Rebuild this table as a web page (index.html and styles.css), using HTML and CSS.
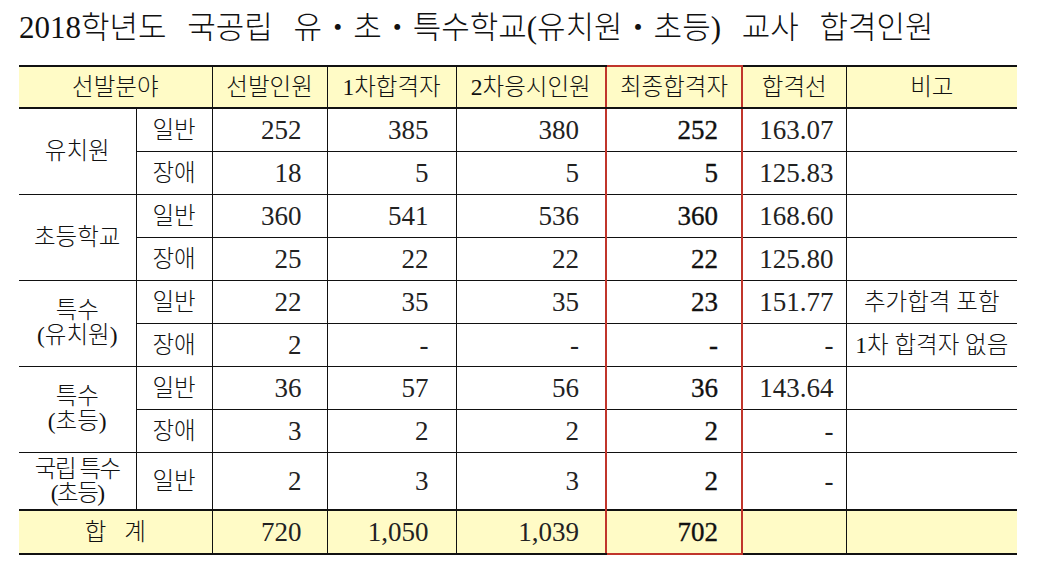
FILE: index.html
```html
<!DOCTYPE html>
<html lang="ko">
<head>
<meta charset="utf-8">
<title>2018학년도 국공립 유・초・특수학교 교사 합격인원</title>
<link rel="stylesheet" href="styles.css">
</head>
<body>
<div class="page">
  <h1 class="title">2018학년도 국공립 유・초・특수학교(유치원・초등) 교사 합격인원</h1>
  <table class="result">
    <colgroup>
      <col class="w-group"><col class="w-sub"><col class="w-c2"><col class="w-c3"><col class="w-c4"><col class="w-c5"><col class="w-c6"><col class="w-c7">
    </colgroup>
    <thead>
      <tr class="head">
        <th colspan="2">선발분야</th>
        <th>선발인원</th>
        <th>1차합격자</th>
        <th>2차응시인원</th>
        <th class="fin">최종합격자</th>
        <th>합격선</th>
        <th>비고</th>
      </tr>
    </thead>
    <tbody>
      <tr>
        <td class="grp" rowspan="2">유치원</td>
        <td class="sub">일반</td>
        <td class="n c2">252</td><td class="n c3">385</td><td class="n c4">380</td><td class="n c5 fin">252</td><td class="n c6">163.07</td><td class="note"></td>
      </tr>
      <tr>
        <td class="sub">장애</td>
        <td class="n c2">18</td><td class="n c3">5</td><td class="n c4">5</td><td class="n c5 fin">5</td><td class="n c6">125.83</td><td class="note"></td>
      </tr>
      <tr>
        <td class="grp" rowspan="2">초등학교</td>
        <td class="sub">일반</td>
        <td class="n c2">360</td><td class="n c3">541</td><td class="n c4">536</td><td class="n c5 fin">360</td><td class="n c6">168.60</td><td class="note"></td>
      </tr>
      <tr>
        <td class="sub">장애</td>
        <td class="n c2">25</td><td class="n c3">22</td><td class="n c4">22</td><td class="n c5 fin">22</td><td class="n c6">125.80</td><td class="note"></td>
      </tr>
      <tr>
        <td class="grp two" rowspan="2">특수<br>(유치원)</td>
        <td class="sub">일반</td>
        <td class="n c2">22</td><td class="n c3">35</td><td class="n c4">35</td><td class="n c5 fin">23</td><td class="n c6">151.77</td><td class="note">추가합격 포함</td>
      </tr>
      <tr>
        <td class="sub">장애</td>
        <td class="n c2">2</td><td class="n c3">-</td><td class="n c4">-</td><td class="n c5 fin">-</td><td class="n c6">-</td><td class="note">1차 합격자 없음</td>
      </tr>
      <tr>
        <td class="grp two" rowspan="2">특수<br>(초등)</td>
        <td class="sub">일반</td>
        <td class="n c2">36</td><td class="n c3">57</td><td class="n c4">56</td><td class="n c5 fin">36</td><td class="n c6">143.64</td><td class="note"></td>
      </tr>
      <tr>
        <td class="sub">장애</td>
        <td class="n c2">3</td><td class="n c3">2</td><td class="n c4">2</td><td class="n c5 fin">2</td><td class="n c6">-</td><td class="note"></td>
      </tr>
      <tr class="tall">
        <td class="grp two tight">국립 특수<br>(초등)</td>
        <td class="sub">일반</td>
        <td class="n c2">2</td><td class="n c3">3</td><td class="n c4">3</td><td class="n c5 fin">2</td><td class="n c6">-</td><td class="note"></td>
      </tr>
    </tbody>
    <tfoot>
      <tr class="total">
        <td colspan="2" class="sum">합 계</td>
        <td class="n c2">720</td><td class="n c3">1,050</td><td class="n c4">1,039</td><td class="n c5 fin">702</td><td class="n c6"></td><td class="note"></td>
      </tr>
    </tfoot>
  </table>
</div>
</body>
</html>
```

FILE: styles.css
```css
html, body {
  margin: 0;
  padding: 0;
  background: #ffffff;
}

body {
  font-family: "Liberation Serif", "Noto Sans CJK KR", serif;
  color: #111111;
}

.page {
  padding: 0 0 0 19px;
  width: 998px;
}

.title {
  margin: 0;
  height: 65px;
  box-sizing: border-box;
  padding: 9px 0 0 0;
  font-size: 31px;
  line-height: 38px;
  font-weight: 300;
  word-spacing: 13px;
  white-space: nowrap;
  color: #111111;
}

.result {
  border-collapse: collapse;
  table-layout: fixed;
  width: 998px;
  font-size: 23.5px;
  font-weight: 300;
}

.w-group { width: 117px; }
.w-sub { width: 76px; }
.w-c2 { width: 115px; }
.w-c3 { width: 129px; }
.w-c4 { width: 150px; }
.w-c5 { width: 136px; }
.w-c6 { width: 104px; }
.w-c7 { width: 171px; }

.result th,
.result td {
  border: 1px solid #111111;
  padding: 0;
  text-align: center;
  vertical-align: middle;
  line-height: 26px;
  white-space: nowrap;
  overflow: visible;
}

.result th:first-child,
.result td:first-child {
  border-left: none;
}

.result th:last-child,
.result td:last-child {
  border-right: none;
}

.result .head th {
  height: 40px;
  background: #fffbc6;
  font-weight: 300;
  border-top: 2px solid #111111;
  border-bottom: 2px solid #111111;
}

.result tbody tr {
  height: 43px;
}

.result tbody tr.tall {
  height: 58px;
}

.result .total td {
  height: 42px;
  background: #fffbc6;
  border-top: 2px solid #111111;
  border-bottom: 2px solid #111111;
}

.result td.n {
  text-align: right;
  font-size: 27px;
  font-weight: 400;
  color: #222222;
}

.result td.c2 { padding-right: 25px; }
.result td.c3 { padding-right: 27px; }
.result td.c4 { padding-right: 26px; }
.result td.c5 { padding-right: 23px; }
.result td.c6 { padding-right: 12px; }

.result .fin {
  border-left: 2px solid #c0352b;
  border-right: 2px solid #c0352b;
}

.result .head .fin {
  border-top: 2px solid #c0352b;
}

.result .total .fin {
  border-bottom: 2px solid #c0352b;
}

.result td.n.fin {
  color: #111111;
  -webkit-text-stroke: 0.35px #111111;
}

.result td.grp.two {
  line-height: 25px;
}

.result td.grp.tight {
  line-height: 24px;
  letter-spacing: -1.5px;
}

.result td.sum {
  word-spacing: 12px;
}
```
